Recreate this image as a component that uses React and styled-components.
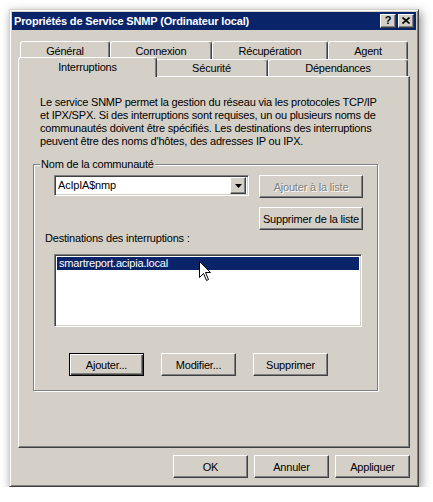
import React from 'react';
import styled, { createGlobalStyle, css } from 'styled-components';

const Global = createGlobalStyle`
  html, body { margin: 0; padding: 0; background: #ffffff; }
  body {
    font-family: "Liberation Sans", Arial, sans-serif;
    font-size: 11px;
    letter-spacing: -0.2px;
    color: #000;
  }
  * { box-sizing: border-box; }
`;

const FACE = '#D4D0C8';

const raised = css`
  border: 1px solid;
  border-color: #ffffff #404040 #404040 #ffffff;
  box-shadow: inset -1px -1px #808080;
`;

const sunken = css`
  border: 1px solid;
  border-color: #808080 #ffffff #ffffff #808080;
  box-shadow: inset 1px 1px #404040, inset -1px -1px ${FACE};
`;

const Page = styled.div`
  padding: 9px 0 0 9px;
`;

const Window = styled.div`
  width: 410px;
  height: 478px;
  background: ${FACE};
  border: 1px solid;
  border-color: ${FACE} #404040 #404040 ${FACE};
  box-shadow: inset 1px 1px #ffffff, inset -1px -1px #808080,
    2px 3px 9px rgba(0, 0, 0, 0.45);
  padding: 2px;
  display: flex;
  flex-direction: column;
`;

const TitleBar = styled.div`
  height: 18px;
  background: #0a246a;
  display: flex;
  align-items: center;
  padding: 0 2px 0 2px;
`;

const Title = styled.div`
  flex: 1;
  color: #ffffff;
  font-weight: bold;
  font-size: 11px;
  white-space: nowrap;
  letter-spacing: -0.15px;
`;

const CaptionButtons = styled.div`
  display: flex;
  gap: 2px;
`;

const CaptionButton = styled.div`
  width: 16px;
  height: 14px;
  background: ${FACE};
  ${raised};
  display: flex;
  align-items: center;
  justify-content: center;
  font-weight: bold;
  font-size: 11px;
  line-height: 1;
  padding-bottom: 1px;
`;

const Body = styled.div`
  flex: 1;
  display: flex;
  flex-direction: column;
  padding: 11px 6px 6px 6px;
`;

const TabStrip = styled.div`
  display: flex;
  flex-direction: column;
  height: 35px;
`;

const TabRow = styled.div`
  display: flex;
  align-items: flex-end;
  height: ${(p) => p.$h}px;
  padding: 0 2px;
`;

const Tab = styled.div`
  flex: 0 0 ${(p) => p.$w}px;
  width: ${(p) => p.$w}px;
  height: ${(p) => (p.$active ? p.$h + 3 : p.$h)}px;
  background: ${FACE};
  border-top: 1px solid #ffffff;
  border-left: 1px solid #ffffff;
  border-right: 1px solid #404040;
  border-radius: 3px 3px 0 0;
  box-shadow: inset -1px 0 #808080;
  display: flex;
  align-items: center;
  justify-content: center;
  white-space: nowrap;
  ${(p) =>
    p.$active &&
    css`
      position: relative;
      z-index: 2;
      flex-basis: ${p.$w + 4}px;
      width: ${p.$w + 4}px;
      margin: 0 -2px -1px -2px;
      padding-bottom: 2px;
    `}
`;

const Panel = styled.div`
  height: 372px;
  border: 1px solid;
  border-color: #ffffff #404040 #404040 #ffffff;
  box-shadow: inset -1px -1px #808080;
  padding: 19px 0 0 14px;
  display: flex;
  flex-direction: column;
  align-items: flex-start;
`;

const Description = styled.p`
  margin: 0 0 0 7px;
  line-height: 13px;
  white-space: nowrap;
`;

const GroupBox = styled.div`
  margin-top: 16px;
  width: 345px;
  border: 1px solid #808080;
  box-shadow: inset 1px 1px #ffffff, 1px 1px #ffffff;
  display: flex;
  flex-direction: column;
  align-items: flex-start;
  padding: 0 0 14px 11px;
`;

const GroupLabel = styled.div`
  margin: -7px 0 0 -5px;
  padding: 0 1px;
  background: ${FACE};
  line-height: 13px;
  white-space: nowrap;
`;

const CommunityGrid = styled.div`
  margin: 4px 0 0 9px;
  display: grid;
  grid-template-columns: 195px 104px;
  column-gap: 10px;
  row-gap: 9px;
  align-items: start;
`;

const Combo = styled.div`
  width: 195px;
  height: 21px;
  background: #ffffff;
  ${sunken};
  padding: 2px;
  display: flex;
  align-items: center;
`;

const ComboText = styled.div`
  flex: 1;
  padding-left: 1px;
  line-height: 13px;
`;

const DropButton = styled.div`
  width: 16px;
  height: 17px;
  background: ${FACE};
  ${raised};
  display: flex;
  align-items: center;
  justify-content: center;
`;

const Button = styled.div`
  width: ${(p) => p.$w || 75}px;
  height: 23px;
  background: ${FACE};
  display: flex;
  align-items: center;
  justify-content: center;
  white-space: nowrap;
  ${(p) =>
    p.$default
      ? css`
          border: 1px solid #000000;
          box-shadow: inset 1px 1px #ffffff, inset -1px -1px #404040,
            inset -2px -2px #808080;
        `
      : raised};
  ${(p) =>
    p.$disabled &&
    css`
      color: #808080;
      text-shadow: 1px 1px #ffffff;
    `}
`;

const GridSlot = styled.div``;

const FieldLabel = styled.div`
  margin-top: 2px;
  line-height: 13px;
  white-space: nowrap;
`;

const ListBox = styled.div`
  position: relative;
  margin: 9px 0 0 9px;
  width: 308px;
  height: 73px;
  background: #ffffff;
  ${sunken};
  padding: 2px;
`;

const ListItem = styled.div`
  height: 13px;
  line-height: 13px;
  padding-left: 2px;
  background: ${(p) => (p.$selected ? '#0a246a' : 'transparent')};
  color: ${(p) => (p.$selected ? '#ffffff' : '#000000')};
`;

const Cursor = styled.svg`
  position: absolute;
  left: 144px;
  top: 6px;
`;

const ActionRow = styled.div`
  margin: 26px 0 0 24px;
  display: flex;
  gap: 17px;
`;

const DialogButtons = styled.div`
  margin-top: 7px;
  display: flex;
  justify-content: flex-end;
  gap: 6px;
`;

export default function App() {
  return (
    <>
      <Global />
      <Page>
        <Window>
          <TitleBar>
            <Title>Propriétés de Service SNMP (Ordinateur local)</Title>
            <CaptionButtons>
              <CaptionButton>?</CaptionButton>
              <CaptionButton>
                <svg width="8" height="7" viewBox="0 0 8 7">
                  <path d="M0.5 0.5 L7.5 6.5 M7.5 0.5 L0.5 6.5" stroke="#000" strokeWidth="1.6" />
                </svg>
              </CaptionButton>
            </CaptionButtons>
          </TitleBar>
          <Body>
            <TabStrip>
              <TabRow $h={18}>
                <Tab $w={90} $h={18}>Général</Tab>
                <Tab $w={102} $h={18}>Connexion</Tab>
                <Tab $w={116} $h={18}>Récupération</Tab>
                <Tab $w={80} $h={18}>Agent</Tab>
              </TabRow>
              <TabRow $h={17}>
                <Tab $w={135} $h={17} $active>Interruptions</Tab>
                <Tab $w={113} $h={17}>Sécurité</Tab>
                <Tab $w={140} $h={17}>Dépendances</Tab>
              </TabRow>
            </TabStrip>
            <Panel>
              <Description>
                Le service SNMP permet la gestion du réseau via les protocoles TCP/IP
                <br />
                et IPX/SPX. Si des interruptions sont requises, un ou plusieurs noms de
                <br />
                communautés doivent être spécifiés. Les destinations des interruptions
                <br />
                peuvent être des noms d'hôtes, des adresses IP ou IPX.
              </Description>
              <GroupBox>
                <GroupLabel>Nom de la communauté</GroupLabel>
                <CommunityGrid>
                  <Combo>
                    <ComboText>AcIpIA$nmp</ComboText>
                    <DropButton>
                      <svg width="7" height="4" viewBox="0 0 7 4">
                        <path d="M0 0 H7 L3.5 4 Z" fill="#000" />
                      </svg>
                    </DropButton>
                  </Combo>
                  <Button $w={104} $disabled>Ajouter à la liste</Button>
                  <GridSlot />
                  <Button $w={104}>Supprimer de la liste</Button>
                </CommunityGrid>
                <FieldLabel>Destinations des interruptions :</FieldLabel>
                <ListBox>
                  <ListItem $selected>smartreport.acipia.local</ListItem>
                  <Cursor width="13" height="21" viewBox="0 0 13 21">
                    <path
                      d="M0.5 0.5 L0.5 16.5 L4.5 12.5 L7.5 19.5 L9.5 18.5 L6.5 11.5 L11.5 11.5 Z"
                      fill="#ffffff"
                      stroke="#000000"
                      strokeWidth="1"
                    />
                  </Cursor>
                </ListBox>
                <ActionRow>
                  <Button $default>Ajouter...</Button>
                  <Button>Modifier...</Button>
                  <Button>Supprimer</Button>
                </ActionRow>
              </GroupBox>
            </Panel>
            <DialogButtons>
              <Button>OK</Button>
              <Button>Annuler</Button>
              <Button>Appliquer</Button>
            </DialogButtons>
          </Body>
        </Window>
      </Page>
    </>
  );
}
